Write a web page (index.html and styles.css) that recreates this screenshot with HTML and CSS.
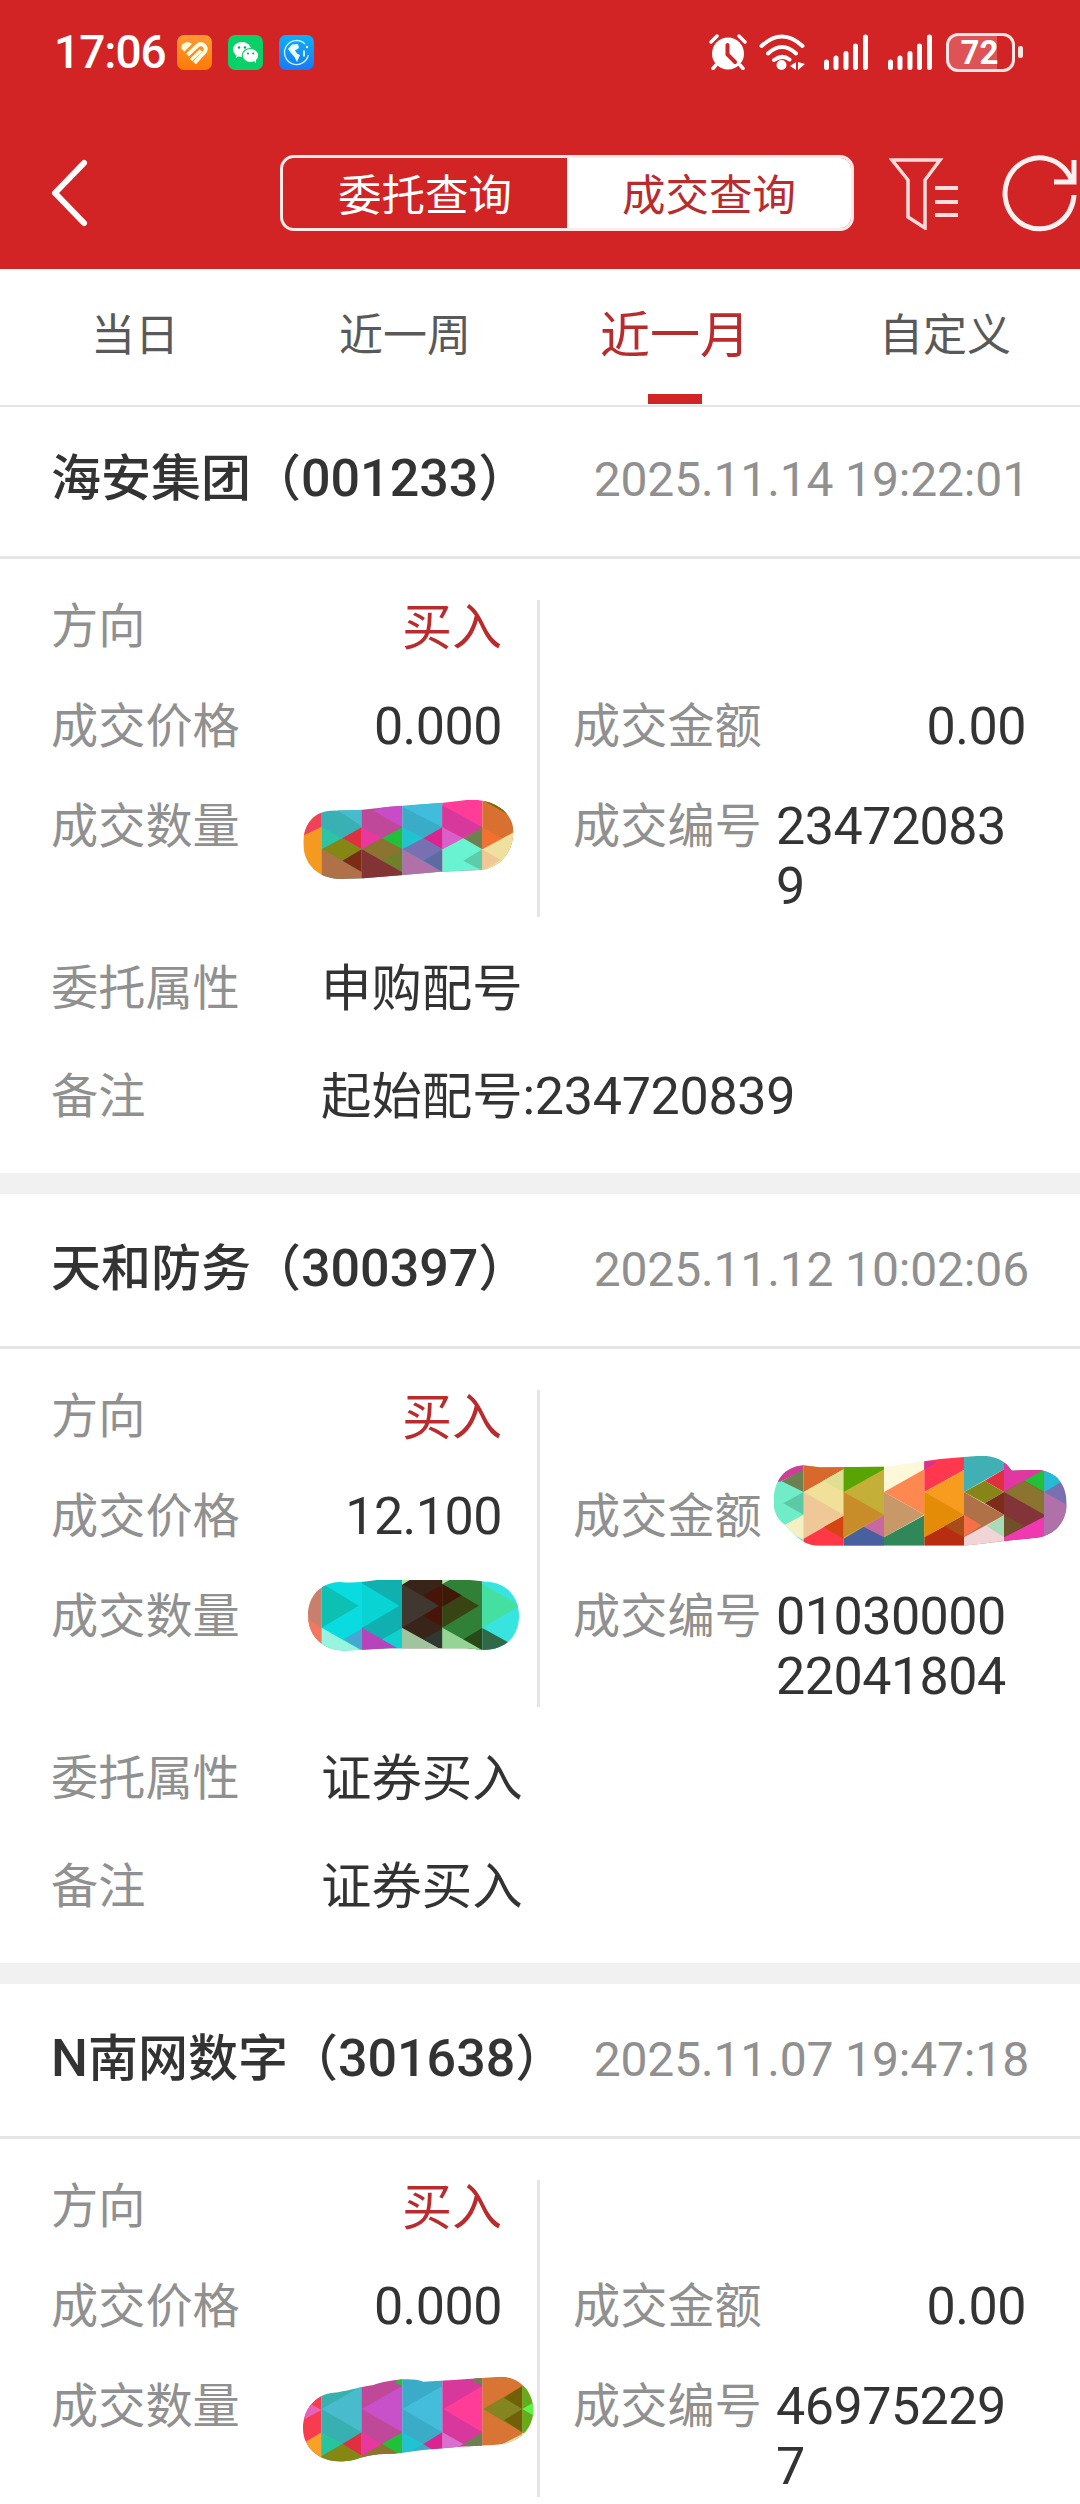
FILE: index.html
```
<!DOCTYPE html>
<html lang="zh-CN">
<head>
    <meta charset="UTF-8">
    <title>成交查询</title>
    <link rel="stylesheet" href="styles.css">
</head>
<body>
    <div class="header">
        <div class="status">
            <span class="time">17:06</span>
            <div class="apps">
                <svg width="35" height="35" viewBox="0 0 35 35">
                    <defs><linearGradient id="go" x1="0" y1="0" x2="0" y2="1"><stop offset="0" stop-color="#ff9a33"/><stop offset="1" stop-color="#ff7a05"/></linearGradient></defs>
                    <rect width="35" height="35" rx="7" fill="url(#go)"/>
                    <path d="M4.500 14 C3 8 11 5 15 9 L7.500 16.500z" fill="#fffbe0"/>
                    <path d="M10.500 20 L20 11 C25 6.500 31 12 28 16.500 L17.500 28" fill="none" stroke="#fffbe0" stroke-width="4"/>
                    <path d="M14 25 L24 15.500" stroke="#fffbe0" stroke-width="3.500"/>
                </svg>
                <svg width="35" height="35" viewBox="0 0 35 35">
                    <rect width="35" height="35" rx="7" fill="#08d167"/>
                    <path d="M8 23 l1 -5 h6z" fill="#fff"/>
                    <ellipse cx="14" cy="14.500" rx="9" ry="7.500" fill="#fff"/>
                    <ellipse cx="22.500" cy="20.500" rx="8.300" ry="7" fill="#fff" stroke="#08d167" stroke-width="1.200"/>
                    <path d="M26 26 l2 2 v-4z" fill="#fff"/>
                    <g fill="#08a855"><circle cx="11" cy="12.500" r="1.200"/><circle cx="17" cy="12.500" r="1.200"/><circle cx="20" cy="18.500" r="1.100"/><circle cx="25.300" cy="18.500" r="1.100"/></g>
                </svg>
                <svg width="35" height="35" viewBox="0 0 35 35">
                    <defs><linearGradient id="gb" x1="0" y1="0" x2="0" y2="1"><stop offset="0" stop-color="#0eb0f5"/><stop offset="1" stop-color="#1a78f8"/></linearGradient></defs>
                    <rect width="35" height="35" rx="7" fill="url(#gb)"/>
                    <path d="M26 9 A12 12 0 1 0 29.300 20" fill="none" stroke="#c8f2ff" stroke-width="1.300"/>
                    <path d="M9 14 L13 9.500 L19 9 L20 13 L16 15.500 L18 18.500 L21 20 L18 27 L15.500 22 L12 18z" fill="#e8fbff"/>
                    <path d="M25 15.500 v6" stroke="#c8f2ff" stroke-width="2"/>
                    <circle cx="28" cy="12" r="1.200" fill="#fff"/>
                </svg>
            </div>
            <div class="indicators">
                <svg class="alarm" width="38" height="36" viewBox="0 0 38 36">
                    <circle cx="19" cy="19.500" r="16" fill="#fff"/>
                    <path d="M2 8 L8 2 M36 8 L30 2 M7 31 L4 34.500 M31 31 L34 34.500" stroke="#fff" stroke-width="3.500" stroke-linecap="round"/>
                    <path d="M18.500 11 V20.500 L26 28" fill="none" stroke="#d22325" stroke-width="4" stroke-linecap="round"/>
                </svg>
                <svg class="wifi" width="46" height="37" viewBox="0 0 46 37">
                    <path d="M2.500 12 Q23 -7 43.500 12 M9 19.500 Q23 6.500 37 19.500 M15 26 Q23 20 30.500 25.500" fill="none" stroke="#fff" stroke-width="4" stroke-linecap="round"/>
                    <circle cx="22.500" cy="31" r="5" fill="#fff"/>
                    <path d="M37 28 v8 l-6 -4z M39 28 v8 l7 -6z" fill="#fff"/>
                </svg>
                <svg class="signal" width="45" height="36" viewBox="0 0 45 36">
                    <path d="M2.500 28 V33.500 M12 24 V33.500 M22 19.500 V33.500 M31.500 12 V33.500 M41.500 3 V33.500" stroke="#fff" stroke-width="5" stroke-linecap="round"/>
                </svg>
                <svg class="signal" width="45" height="36" viewBox="0 0 45 36">
                    <path d="M2.500 28 V33.500 M12 24 V33.500 M22 19.500 V33.500 M31.500 12 V33.500 M41.500 3 V33.500" stroke="#fff" stroke-width="5" stroke-linecap="round"/>
                </svg>
                <div class="battery">72</div>
                <div class="battery-cap"></div>
            </div>
        </div>

        <div class="nav">
            <svg class="back" width="40" height="70" viewBox="0 0 40 70">
                <path d="M34 5 L5 35 L34 65" fill="none" stroke="#fff" stroke-width="6" stroke-linecap="round" stroke-linejoin="round"/>
            </svg>
            <div class="switch">
                <div class="switch-item">委托查询</div>
                <div class="switch-item on">成交查询</div>
            </div>
            <svg class="filter" width="72" height="74" viewBox="0 0 72 74">
                <path d="M3 4 H51 L36 24 V72 L19 61 V24 Z" fill="none" stroke="#ffdcdc" stroke-width="3.500"/>
                <path d="M46 32 H69 M46 46 H69 M46 59 H69" stroke="#ffdcdc" stroke-width="4"/>
            </svg>
            <svg class="refresh" width="76" height="80" viewBox="0 0 76 80">
                <path d="M72 42 A34.500 35.500 0 1 1 69.500 27" fill="none" stroke="#fff0f0" stroke-width="5"/>
                <path d="M72 7 V29 H52" fill="none" stroke="#fff0f0" stroke-width="5"/>
            </svg>
        </div>
    </div>

    <div class="tabs">
        <div class="tab">当日</div>
        <div class="tab">近一周</div>
        <div class="tab active">近一月</div>
        <div class="tab">自定义</div>
    </div>

    <div class="card">
        <div class="card-head">
            <span class="name">海安集团（<span class="num">001233</span>）</span>
            <span class="date">2025.11.14 19:22:01</span>
        </div>
        <div class="cols">
            <div class="col left">
                <div class="row"><label>方向</label><span class="value buy">买入</span></div>
                <div class="row"><label>成交价格</label><span class="value num">0.000</span></div>
                <div class="row"><label>成交数量</label>
                    <svg class="mask mask-a" width="250" height="120" viewBox="0 0 750 360">
                        <clipPath id="ca"><path d="M70 190 C70 140 95 98 150 92 L240 90 L330 80 L490 68 L560 60 C640 55 700 95 700 155 C700 215 660 265 600 270 L480 275 L370 285 L250 295 L180 297 C110 295 70 250 70 190Z"/></clipPath>
                        <g clip-path="url(#ca)">
                            <path fill="#f59a20" d="M60 50H125V310H60z"/>
                            <path fill="#f0405a" d="M60 50H125V140L60 172z"/>
                            <path fill="#38b0b4" d="M125 50H245V310H125z"/>
                            <path fill="#48bccc" d="M125 60H245V138z"/>
                            <path fill="#2cc4a4" d="M125 142L187 175L125 208z"/>
                            <path fill="#e03040" d="M187 175L245 142V208z"/>
                            <path fill="#868612" d="M125 208L187 175L245 208L187 242z"/>
                            <path fill="#b07048" d="M125 208L245 275V310H125z"/>
                            <path fill="#7c2c14" d="M187 242L245 208V276z"/>
                            <path fill="#c04898" d="M245 50H367V310H245z"/>
                            <path fill="#c84cc8" d="M280 92L367 60V142z"/>
                            <path fill="#e838a0" d="M245 142L305 175L245 208z"/>
                            <path fill="#20c038" d="M305 175L367 142V208z"/>
                            <path fill="#8a7430" d="M245 208L305 175L367 208L305 242z"/>
                            <path fill="#708028" d="M305 242L367 208V277z"/>
                            <path fill="#823434" d="M245 208L367 277V310H245z"/>
                            <path fill="#3aacc8" d="M367 50H487V310H367z"/>
                            <path fill="#40bcdc" d="M367 80L487 55V142z"/>
                            <path fill="#20c4d0" d="M367 142L430 175L367 208z"/>
                            <path fill="#dc2490" d="M430 175L487 142V208z"/>
                            <path fill="#7870b0" d="M367 208L430 175L487 208L430 242z"/>
                            <path fill="#b070a8" d="M367 208L487 275V300H367z"/>
                            <path fill="#5c6ca0" d="M430 242L487 208V275z"/>
                            <path fill="#ff3c98" d="M487 50H607V310H487z"/>
                            <path fill="#d8389c" d="M487 76L607 142L487 208z"/>
                            <path fill="#d860c8" d="M487 142L550 175L487 208z"/>
                            <path fill="#6c8050" d="M550 175L607 142V208z"/>
                            <path fill="#68f4d0" d="M487 208L550 175L607 208V300H487z"/>
                            <path fill="#5cccaa" d="M550 242L607 208V272z"/>
                            <path fill="#d87030" d="M607 50H710V310H607z"/>
                            <path fill="#7c6a08" d="M607 60H710V118z"/>
                            <path fill="#f47030" d="M607 142L665 175L607 208z"/>
                            <path fill="#f0e0a0" d="M607 208L710 152V300H607z"/>
                            <path fill="#f0c898" d="M607 208L662 240L607 272z"/>
                        </g>
                    </svg>
                </div>
            </div>
            <div class="divider"></div>
            <div class="col right">
                <div class="row"></div>
                <div class="row"><label>成交金额</label><span class="value num">0.00</span></div>
                <div class="row"><label>成交编号</label><span class="value num long">234720839</span></div>
            </div>
        </div>
        <div class="extra">
            <div class="row"><label>委托属性</label><span class="text">申购配号</span></div>
            <div class="row"><label>备注</label><span class="text">起始配号<span class="num">:234720839</span></span></div>
        </div>
    </div>

    <div class="card">
        <div class="card-head">
            <span class="name">天和防务（<span class="num">300397</span>）</span>
            <span class="date">2025.11.12 10:02:06</span>
        </div>
        <div class="cols">
            <div class="col left">
                <div class="row"><label>方向</label><span class="value buy">买入</span></div>
                <div class="row"><label>成交价格</label><span class="value num">12.100</span></div>
                <div class="row"><label>成交数量</label>
                    <svg class="mask mask-b" width="250" height="110" viewBox="0 0 750 330">
                        <clipPath id="cb"><path d="M54 165 C54 110 90 68 150 66 C190 70 220 66 260 60 L540 60 L590 65 C650 68 687 110 687 168 C687 225 650 270 580 270 L530 265 L300 265 L160 272 C95 270 54 225 54 165Z"/></clipPath>
                        <g clip-path="url(#cb)">
                            <path fill="#c8806c" d="M40 40H95V290H40z"/>
                            <path fill="#f47860" d="M40 165L95 205V290H40z"/>
                            <path fill="#08dce0" d="M95 40H216V290H95z"/>
                            <path fill="#0cc0b4" d="M95 70L206 137L95 203z"/>
                            <path fill="#98f4dc" d="M95 203L216 272V290H95z"/>
                            <path fill="#44a8d0" d="M160 238L216 206V270z"/>
                            <path fill="#10b0b0" d="M216 40H336V290H216z"/>
                            <path fill="#08d4d4" d="M216 70L328 137L216 203z"/>
                            <path fill="#b844bc" d="M216 203L336 272V290H216z"/>
                            <path fill="#10d0d0" d="M276 238L336 205V272z"/>
                            <path fill="#382418" d="M336 40H457V290H336z"/>
                            <path fill="#403830" d="M336 72L447 137L336 203z"/>
                            <path fill="#481408" d="M400 106L457 74V200L400 168L447 137z"/>
                            <path fill="#a0c4a0" d="M336 203L457 270V290H336z"/>
                            <path fill="#303830" d="M400 238L457 206V268z"/>
                            <path fill="#308038" d="M457 40H577V290H457z"/>
                            <path fill="#384414" d="M457 72L567 137L457 203z"/>
                            <path fill="#401808" d="M457 72L515 106L457 140z"/>
                            <path fill="#94d494" d="M457 203L577 270V290H457z"/>
                            <path fill="#284818" d="M520 238L577 204V270z"/>
                            <path fill="#38e4e0" d="M577 40H700V290H577z"/>
                            <path fill="#44e0a0" d="M577 72L690 137L577 203z"/>
                            <path fill="#306848" d="M577 204L660 250L577 290z"/>
                            <path fill="#b0e8b0" d="M336 40H376V50L336 74zM457 40H497V50L457 72z"/>
                        </g>
                    </svg>
                </div>
            </div>
            <div class="divider"></div>
            <div class="col right">
                <div class="row"></div>
                <div class="row"><label>成交金额</label>
                    <svg class="mask mask-c" width="320" height="120" viewBox="0 0 960 360">
                        <clipPath id="cc"><path d="M41 185 C41 120 75 80 130 76 L180 82 L380 80 L540 57 L650 48 C700 44 735 60 755 92 L830 90 C885 92 920 130 920 190 C920 240 890 285 830 293 L740 302 L640 314 L610 317 H180 C140 317 120 300 105 285 L75 255 C50 235 41 215 41 185Z"/></clipPath>
                        <g clip-path="url(#cc)">
                            <path fill="#70ecc8" d="M30 40H131V330H30z"/>
                            <path fill="#d03c98" d="M30 60H131V90L60 125H30z"/>
                            <path fill="#6c8050" d="M65 124L131 88V156z"/>
                            <path fill="#5cc8a4" d="M70 190L131 156V224z"/>
                            <path fill="#f4f0c4" d="M60 262L131 224V300z"/>
                            <path fill="#f0c898" d="M131 40H251V330H131z"/>
                            <path fill="#d8682c" d="M131 60H251V88L131 156z"/>
                            <path fill="#f0e098" d="M131 156L251 88V224z"/>
                            <path fill="#dce090" d="M190 122L251 88V156z"/>
                            <path fill="#ff3848" d="M131 296L251 228V330H131z"/>
                            <path fill="#d44410" d="M190 262L251 228V296z"/>
                            <path fill="#c4b038" d="M251 40H372V330H251z"/>
                            <path fill="#58a404" d="M251 60H372V88L251 156z"/>
                            <path fill="#c88c28" d="M251 156L372 224L251 292z"/>
                            <path fill="#c868a0" d="M311 260L372 226V292z"/>
                            <path fill="#4860a0" d="M251 296L311 260L372 292V330H251z"/>
                            <path fill="#fcf8d8" d="M372 40H493V88L372 156z"/>
                            <path fill="#ff8850" d="M372 156L493 88V224z"/>
                            <path fill="#c89868" d="M372 156L493 224L372 292z"/>
                            <path fill="#308858" d="M372 292L493 226V330H372z"/>
                            <path fill="#ff3850" d="M493 40H612V90L493 156z"/>
                            <path fill="#d83094" d="M493 60L530 67L493 90z"/>
                            <path fill="#f89c20" d="M493 156L612 90V224L493 292z"/>
                            <path fill="#e48c08" d="M493 156L612 224L493 292z"/>
                            <path fill="#b82c10" d="M493 292L612 226V330H493z"/>
                            <path fill="#a84c18" d="M552 259L612 226V292z"/>
                            <path fill="#40b0b4" d="M612 40H732V88L612 156z"/>
                            <path fill="#40b0b4" d="M732 40H760V92H732z"/>
                            <path fill="#e03040" d="M674 122L732 88V156z"/>
                            <path fill="#868618" d="M612 156L674 122L732 156L674 190z"/>
                            <path fill="#b07048" d="M612 156L732 224V330H612z"/>
                            <path fill="#7c2c18" d="M674 190L732 156V224z"/>
                            <path fill="#f87048" d="M612 224L664 256L612 292z"/>
                            <path fill="#f0d4d8" d="M612 292L732 226V330H612z"/>
                            <path fill="#a8dcb8" d="M680 258L732 226V292z"/>
                            <path fill="#823438" d="M732 88H853V330H732z"/>
                            <path fill="#e038a0" d="M732 60H853V90L732 156z"/>
                            <path fill="#20c038" d="M792 122L853 88V156z"/>
                            <path fill="#8a7430" d="M732 156L792 122L853 156V224z"/>
                            <path fill="#705028" d="M732 224L792 258L732 292z"/>
                            <path fill="#f038b0" d="M732 292L853 230V330H732z"/>
                            <path fill="#7870b0" d="M853 40H930V330H853z"/>
                            <path fill="#24bcd4" d="M853 80L930 110L853 156z"/>
                            <path fill="#b070a8" d="M853 156L930 200V300H853z"/>
                        </g>
                    </svg>
                </div>
                <div class="row"><label>成交编号</label><span class="value num long">0103000022041804</span></div>
            </div>
        </div>
        <div class="extra">
            <div class="row"><label>委托属性</label><span class="text">证券买入</span></div>
            <div class="row"><label>备注</label><span class="text">证券买入</span></div>
        </div>
    </div>

    <div class="card">
        <div class="card-head">
            <span class="name"><span class="num">N</span>南网数字（<span class="num">301638</span>）</span>
            <span class="date">2025.11.07 19:47:18</span>
        </div>
        <div class="cols">
            <div class="col left">
                <div class="row"><label>方向</label><span class="value buy">买入</span></div>
                <div class="row"><label>成交价格</label><span class="value num">0.000</span></div>
                <div class="row"><label>成交数量</label>
                    <svg class="mask mask-d" width="270" height="120" viewBox="0 0 810 360">
                        <clipPath id="cd"><path d="M69 205 C69 150 105 102 160 98 C200 95 230 82 280 75 C320 62 390 50 430 65 L520 60 L660 50 C720 50 760 95 760 150 C760 205 720 250 650 254 L540 260 L430 270 L340 281 C280 280 250 290 220 300 C130 320 69 270 69 205Z"/></clipPath>
                        <g clip-path="url(#cd)">
                            <path fill="#f83c50" d="M60 40H125V330H60z"/>
                            <path fill="#e860b8" d="M60 115L125 150L60 185z"/>
                            <path fill="#f8a028" d="M60 255L125 217V330H60z"/>
                            <path fill="#38b0b0" d="M125 40H245V330H125z"/>
                            <path fill="#48bccc" d="M125 147L245 78V217z"/>
                            <path fill="#28c4a0" d="M125 217L187 252L125 288z"/>
                            <path fill="#e03040" d="M187 252L245 217V288z"/>
                            <path fill="#868612" d="M125 288L187 252L245 288V330H125z"/>
                            <path fill="#c04898" d="M245 40H367V330H245z"/>
                            <path fill="#c850c8" d="M245 147L367 78V217z"/>
                            <path fill="#e838a0" d="M245 217L305 252L245 288z"/>
                            <path fill="#20c038" d="M305 252L367 217V288zM345 68L367 50V78z"/>
                            <path fill="#8a7430" d="M245 288L305 252L367 288V330H245z"/>
                            <path fill="#3aacc8" d="M367 40H487V330H367z"/>
                            <path fill="#44bcdc" d="M367 147L487 78V217z"/>
                            <path fill="#20c4d0" d="M367 217L430 252L367 288z"/>
                            <path fill="#dc2490" d="M430 252L487 217V288z"/>
                            <path fill="#d8389c" d="M487 40H607V330H487z"/>
                            <path fill="#ff3c98" d="M490 147L607 78V217z"/>
                            <path fill="#d870d0" d="M487 217L550 252L487 288z"/>
                            <path fill="#6c8050" d="M550 252L607 217V288zM575 60L607 40V78z"/>
                            <path fill="#d87434" d="M607 40H727V330H607z"/>
                            <path fill="#848420" d="M610 147L727 78V217z"/>
                            <path fill="#706008" d="M672 113L727 78V147zM672 181L727 147V217z"/>
                            <path fill="#e8e0a0" d="M660 256L740 215V260z"/>
                            <path fill="#64ac18" d="M727 40H770V220H727z"/>
                            <path fill="#60f448" d="M727 147L770 122V172z"/>
                        </g>
                    </svg>
                </div>
            </div>
            <div class="divider"></div>
            <div class="col right">
                <div class="row"></div>
                <div class="row"><label>成交金额</label><span class="value num">0.00</span></div>
                <div class="row"><label>成交编号</label><span class="value num long">469752297</span></div>
            </div>
        </div>
    </div>
</body>
</html>
```

FILE: styles.css
```
body {
    width: 1080px;
    height: 2504px;
    margin: 0;
    overflow: hidden;
    background-color: #fff;
    color: #333;
    font-family: "Noto Sans CJK SC", sans-serif;
    font-size: 50px;
}

svg {
    display: block;
    flex-shrink: 0;
}

.num {
    font-family: Roboto, "Noto Sans CJK SC", sans-serif;
    font-size: 52px;
}

/* header */
.header {
    height: 269px;
    background-color: #d22325;
    color: #fff;
}

.status {
    display: flex;
    align-items: center;
    height: 104px;
    padding-left: 54px;
    padding-right: 57px;
}

.time {
    width: 123px;
    font-family: Roboto, sans-serif;
    font-size: 46px;
    font-weight: 500;
    letter-spacing: -1px;
}

.apps {
    display: flex;
    gap: 16px;
}

.indicators {
    display: flex;
    align-items: center;
    margin-left: auto;
}

.wifi {
    margin-left: 12px;
}

.signal {
    margin-left: 19px;
}

.battery {
    box-sizing: border-box;
    width: 69px;
    height: 39px;
    margin-left: 13px;
    padding-right: 2px;
    border: 3px solid #ffe4e4;
    border-radius: 12px;
    background: linear-gradient(90deg, #de5456 76%, #d22325 76%);
    font-family: Roboto, sans-serif;
    font-size: 33px;
    font-weight: 700;
    line-height: 34px;
    text-align: center;
}

.battery-cap {
    width: 5px;
    height: 12px;
    margin-left: 3px;
    border-radius: 2px;
    background-color: #ffe4e4;
}

.nav {
    display: flex;
    align-items: center;
    height: 178px;
    padding-left: 50px;
}

.switch {
    display: flex;
    box-sizing: border-box;
    width: 574px;
    height: 76px;
    margin-left: 190px;
    border: 3px solid #ffe9e9;
    border-radius: 14px;
    background-color: #d22325;
    overflow: hidden;
}

.switch-item {
    flex: 1;
    font-size: 43.5px;
    line-height: 69px;
    text-align: center;
}

.switch-item.on {
    background-color: #fff;
    color: #b92b2c;
}

.filter {
    margin-left: 35px;
}

.refresh {
    margin-left: 41px;
}

/* tabs */
.tabs {
    display: flex;
    position: relative;
    box-sizing: border-box;
    height: 138px;
    margin-bottom: -3px;
    border-bottom: 2px solid #e5e5e5;
}

.tab {
    display: flex;
    flex-direction: column;
    align-items: center;
    flex: 1;
    color: #595959;
    font-size: 44px;
    line-height: 127px;
}

.tab.active {
    color: #b92b2c;
    font-size: 50px;
    line-height: 125px;
}

.tab.active::after {
    content: "";
    width: 54px;
    height: 10px;
    background-color: #d22325;
}

/* cards */
.card {
    border-bottom: 21px solid #f1f1f1;
}

.card:last-child {
    border-bottom: none;
}

.card-head {
    display: flex;
    align-items: center;
    justify-content: space-between;
    height: 152px;
    padding: 0 51px;
    border-bottom: 3px solid #e5e5e5;
    line-height: 58px;
    white-space: nowrap;
}

.name {
    padding-bottom: 8px;
    font-weight: 500;
}

.date {
    color: #909090;
    font-family: Roboto, sans-serif;
    font-size: 48px;
    letter-spacing: -0.15px;
}

.cols {
    display: flex;
    height: 320px;
    padding-top: 38px;
}

.col {
    display: flex;
    flex-direction: column;
    gap: 42px;
}

.left {
    width: 451px;
    padding-left: 51px;
    padding-right: 35px;
}

.right {
    width: 453px;
    padding-left: 33px;
}

.divider {
    width: 3px;
    margin-top: 3px;
    background-color: #e5e5e5;
}

.row {
    display: flex;
    position: relative;
    align-items: flex-start;
    justify-content: space-between;
    height: 58px;
    line-height: 52px;
}

label {
    flex-shrink: 0;
    color: #909090;
    font-size: 47.2px;
}

.value.num {
    line-height: 60px;
    letter-spacing: -0.5px;
}

.buy {
    color: #b92b2c;
}

.long {
    width: 250px;
    word-break: break-all;
}

.extra {
    display: flex;
    flex-direction: column;
    gap: 50px;
    padding: 42px 51px 48px;
}

.extra .row {
    justify-content: flex-start;
}

.extra label {
    width: 270px;
}

.text {
    font-size: 50.4px;
}

.text .num {
    line-height: 1;
    letter-spacing: -0.3px;
}

/* scribbles hiding the private amounts */
.mask {
    position: absolute;
}

.mask-a {
    left: 229px;
    top: -17px;
}

.mask-b {
    left: 239px;
    top: -27px;
}

.mask-c {
    left: 187px;
    top: -47px;
}

.mask-d {
    left: 229px;
    top: -17px;
}
```
